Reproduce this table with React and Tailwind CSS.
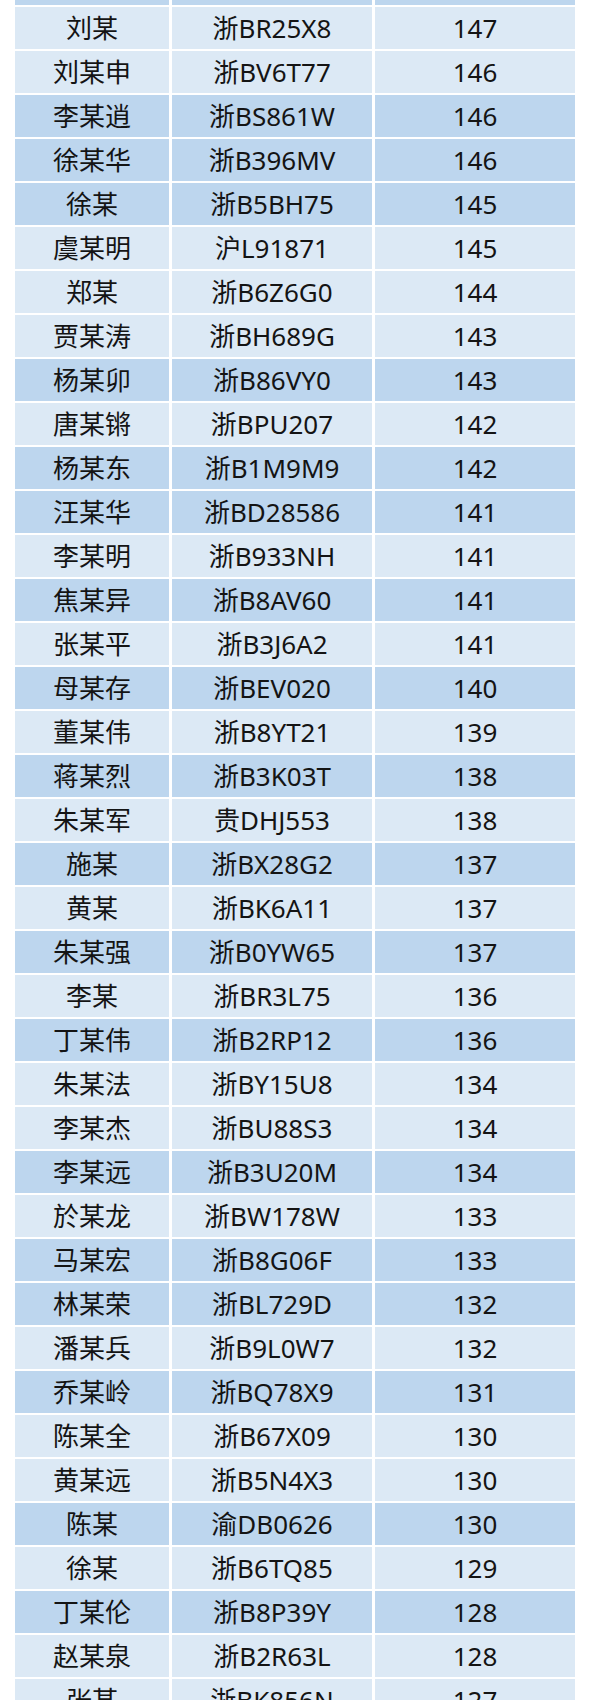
const rows = [
  ["刘某", "浙BR25X8", 147, 0],
  ["刘某申", "浙BV6T77", 146, 0],
  ["李某逍", "浙BS861W", 146, 1],
  ["徐某华", "浙B396MV", 146, 1],
  ["徐某", "浙B5BH75", 145, 1],
  ["虞某明", "沪L91871", 145, 0],
  ["郑某", "浙B6Z6G0", 144, 0],
  ["贾某涛", "浙BH689G", 143, 0],
  ["杨某卯", "浙B86VY0", 143, 1],
  ["唐某锵", "浙BPU207", 142, 0],
  ["杨某东", "浙B1M9M9", 142, 1],
  ["汪某华", "浙BD28586", 141, 1],
  ["李某明", "浙B933NH", 141, 0],
  ["焦某异", "浙B8AV60", 141, 1],
  ["张某平", "浙B3J6A2", 141, 0],
  ["母某存", "浙BEV020", 140, 1],
  ["董某伟", "浙B8YT21", 139, 0],
  ["蒋某烈", "浙B3K03T", 138, 1],
  ["朱某军", "贵DHJ553", 138, 0],
  ["施某", "浙BX28G2", 137, 1],
  ["黄某", "浙BK6A11", 137, 0],
  ["朱某强", "浙B0YW65", 137, 1],
  ["李某", "浙BR3L75", 136, 0],
  ["丁某伟", "浙B2RP12", 136, 1],
  ["朱某法", "浙BY15U8", 134, 0],
  ["李某杰", "浙BU88S3", 134, 0],
  ["李某远", "浙B3U20M", 134, 1],
  ["於某龙", "浙BW178W", 133, 0],
  ["马某宏", "浙B8G06F", 133, 1],
  ["林某荣", "浙BL729D", 132, 1],
  ["潘某兵", "浙B9L0W7", 132, 0],
  ["乔某岭", "浙BQ78X9", 131, 1],
  ["陈某全", "浙B67X09", 130, 0],
  ["黄某远", "浙B5N4X3", 130, 0],
  ["陈某", "渝DB0626", 130, 1],
  ["徐某", "浙B6TQ85", 129, 0],
  ["丁某伦", "浙B8P39Y", 128, 1],
  ["赵某泉", "浙B2R63L", 128, 0],
  ["张某", "浙BK856N", 127, 0],
];

function Cell({ dark, children }) {
  return (
    <div
      className={`h-[42px] flex items-center justify-center ${
        dark ? "bg-[#bdd6ee]" : "bg-[#dce9f5]"
      }`}
    >
      {children}
    </div>
  );
}

export default function App() {
  return (
    <main
      className="w-[590px] h-[1700px] overflow-hidden bg-white pl-[15px] text-[26px] text-[#141414]"
      style={{ fontFamily: '"Noto Sans", "Noto Sans CJK SC", sans-serif' }}
    >
      <div className="grid grid-cols-[154px_200px_200px] gap-x-[3px] gap-y-[2px]">
        <div className="h-[5px] bg-[#bdd6ee]" />
        <div className="h-[5px] bg-[#bdd6ee]" />
        <div className="h-[5px] bg-[#bdd6ee]" />
        {rows.map(([name, plate, score, dark], i) => (
          <div key={i} className="contents">
            <Cell dark={dark}>{name}</Cell>
            <Cell dark={dark}>{plate}</Cell>
            <Cell dark={dark}>{score}</Cell>
          </div>
        ))}
      </div>
    </main>
  );
}
